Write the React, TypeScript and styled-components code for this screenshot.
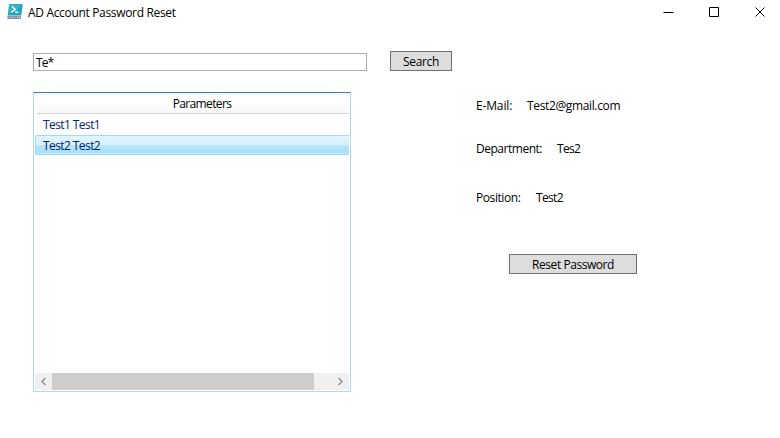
import React from "react";
import styled, { createGlobalStyle } from "styled-components";

const GlobalStyle = createGlobalStyle`
  * { box-sizing: border-box; }
  body {
    margin: 0;
    background: #fff;
    color: #000;
    font: 12px/16px "Open Sans", "Noto Sans", sans-serif;
    overflow: hidden;
  }
`;

const Window = styled.div`
  width: 780px;
  height: 438px;
  background: #fff;
`;

const TitleBar = styled.header`
  display: flex;
  align-items: flex-start;
  height: 51px;
  padding: 4px 14px 0 7px;
`;

const Text = styled.span<{ $spacing?: number }>`
  display: block;
  white-space: pre;
  letter-spacing: ${(p) => p.$spacing ?? -0.33}px;
`;

const Title = styled(Text)`
  flex: 1;
  margin: 1px 0 0 5px;
`;

const Controls = styled.div`
  display: flex;
  gap: 35px;
  padding-top: 3px;
`;

const ControlIcon = styled.svg`
  display: block;
  width: 11px;
  height: 11px;
  fill: none;
  stroke: #000;
`;

const Content = styled.main`
  display: flex;
  padding-left: 33px;
`;

const LeftPane = styled.section`
  width: 443px;
`;

const SearchRow = styled.form`
  display: flex;
  align-items: flex-end;
  gap: 23px;
  height: 20px;
  margin-bottom: 21px;
`;

const SearchBox = styled.div`
  width: 334px;
  height: 18px;
  padding: 1px 0 0 2px;
  border: 1px solid #abadb3;
`;

const Button = styled.button<{ $width: number }>`
  display: flex;
  justify-content: center;
  width: ${(p) => p.$width}px;
  height: 20px;
  padding: 2px 0 0;
  border: 1px solid #707070;
  background: #ddd;
  color: #000;
  font: inherit;
`;

const ListView = styled.div`
  display: flex;
  flex-direction: column;
  width: 318px;
  height: 300px;
  padding: 1px;
  border: 1px solid #b5d5e8;
  border-top-color: #3d7bad;
`;

const ListHeader = styled.div`
  display: flex;
  justify-content: center;
  height: 20px;
  margin-left: 2px;
  padding: 1px 0 0 18px;
  border-top: 1px solid #f2f2f2;
  border-bottom: 1px solid #d5d5d5;
  background: linear-gradient(#fff 35%, #f7f8fa);
`;

const ListRow = styled.div<{ $selected?: boolean }>`
  height: ${(p) => (p.$selected ? 20 : 21)}px;
  padding: ${(p) => (p.$selected ? 2 : 3)}px 0 0 8px;
  color: #042271;
  ${(p) =>
    p.$selected &&
    `
    border: 1px solid #98ddfb;
    border-right: 0;
    border-radius: 2px 0 0 2px;
    background: linear-gradient(#e3f4fc 0%, #d6f0fd 50%, #bce5fb 50%, #a1defa 100%);
    box-shadow: inset 0 -1px #c4eafc;
    padding-left: 7px;
  `}
`;

const ScrollBar = styled.div`
  display: flex;
  height: 17px;
  margin-top: auto;
  background: #f0f0f0;
`;

const Thumb = styled.div`
  width: 262px;
  background: #cdcdcd;
`;

const ScrollArrow = styled.svg`
  display: block;
  width: 17px;
  height: 17px;
  fill: none;
  stroke: #999;
  stroke-width: 1.7;

  &:last-child { margin-left: auto; }
`;

const Details = styled.section`
  width: 200px;
  padding-top: 47px;
`;

const Field = styled.div<{ $after: number }>`
  display: flex;
  gap: 15px;
  height: 16px;
  margin-bottom: ${(p) => p.$after}px;
`;

const Label = styled(Text)<{ $width: number }>`
  width: ${(p) => p.$width}px;
`;

const ResetButton = styled(Button)`
  margin-left: 33px;
`;

const fields = [
  { label: "E-Mail:", width: 36, spacing: -0.15, value: "Test2@gmail.com", valueSpacing: -0.36, after: 27 },
  { label: "Department:", width: 66, spacing: -0.48, value: "Tes2", valueSpacing: -0.7, after: 33 },
  { label: "Position:", width: 45, spacing: -0.42, value: "Test2", valueSpacing: -0.65, after: 48 },
];

const PowerShellIcon = () => (
  <svg width="16" height="16" viewBox="0 0 16 16" aria-hidden="true">
    <path d="M2.8 0H15q1 0 .8 1l-1.5 10H.8L2 1Q2 0 2.8 0Z" fill="#20a4bd" />
    <path d="M3 .5h12.2L10 6 1.2 10.5 2.5 1Z" fill="#47bbce" opacity=".6" />
    <path d="M.7 11h13.7l-.6 3.6q0 .4-.6.4H.9q-.7 0-.6-.6Z" fill="#8796a0" />
    <path d="M.8 11.4h13.4" stroke="#b7c4ca" strokeWidth=".8" />
    <path d="M2 13.3h6" stroke="#a9b6bd" />
    <path d="M10 13.2h1M12 13.2h1" stroke="#e3eaed" />
    <path d="m5 2.5 3.2 2.8-4 3" fill="none" stroke="#fff" strokeWidth="1.5" />
    <path d="M8 8.2h3.5" stroke="#fff" strokeWidth="1.3" />
  </svg>
);

export default function App() {
  return (
    <Window>
      <GlobalStyle />
      <TitleBar>
        <PowerShellIcon />
        <Title>AD Account Password Reset</Title>
        <Controls>
          <ControlIcon viewBox="0 0 11 11"><path d="M.5 5.5h10" /></ControlIcon>
          <ControlIcon viewBox="0 0 11 11"><path d="M.5.5h9v9h-9z" /></ControlIcon>
          <ControlIcon viewBox="0 0 11 11"><path d="m.5.5 9 9m0-9-9 9" /></ControlIcon>
        </Controls>
      </TitleBar>
      <Content>
        <LeftPane>
          <SearchRow>
            <SearchBox><Text $spacing={-0.9}>Te*</Text></SearchBox>
            <Button type="button" $width={62}><Text>Search</Text></Button>
          </SearchRow>
          <ListView>
            <ListHeader><Text $spacing={-0.62}>Parameters</Text></ListHeader>
            <ListRow><Text $spacing={-0.58}>Test1 Test1</Text></ListRow>
            <ListRow $selected><Text $spacing={-0.58}>Test2 Test2</Text></ListRow>
            <ScrollBar>
              <ScrollArrow viewBox="0 0 17 17"><path d="m10.5 5-3.5 3.5 3.5 3.5" /></ScrollArrow>
              <Thumb />
              <ScrollArrow viewBox="0 0 17 17"><path d="m6.5 5 3.5 3.5-3.5 3.5" /></ScrollArrow>
            </ScrollBar>
          </ListView>
        </LeftPane>
        <Details>
          {fields.map((f) => (
            <Field key={f.label} $after={f.after}>
              <Label $width={f.width} $spacing={f.spacing}>{f.label}</Label>
              <Text $spacing={f.valueSpacing}>{f.value}</Text>
            </Field>
          ))}
          <ResetButton type="button" $width={128}><Text $spacing={-0.45}>Reset Password</Text></ResetButton>
        </Details>
      </Content>
    </Window>
  );
}
